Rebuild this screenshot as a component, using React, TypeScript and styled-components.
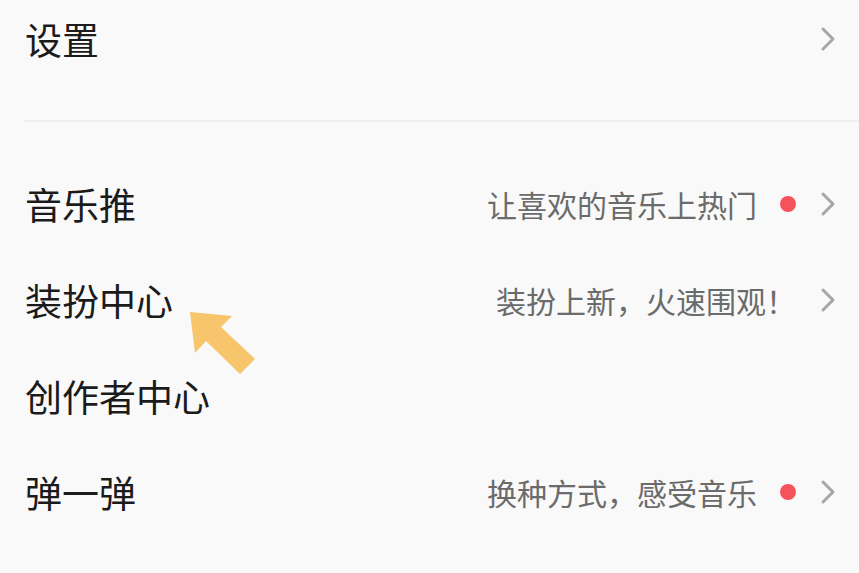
import React from "react";
import styled, { createGlobalStyle } from "styled-components";

const GlobalStyle = createGlobalStyle`
  html, body {
    margin: 0;
    padding: 0;
    background: #f9f9f9;
  }
  body {
    font-family: "Noto Sans CJK SC", "Noto Sans", sans-serif;
  }
`;

const Screen = styled.div`
  position: relative;
  width: 859px;
  height: 573px;
  overflow: hidden;
  background: #f9f9f9;
`;

const TopSection = styled.div`
  margin-left: 24px;
  padding: 0 23px 42px 1px;
  border-bottom: 2px solid #eeeeee;
`;

const List = styled.div`
  padding: 34px 23px 0 25px;
`;

const Row = styled.div<{ $h: number }>`
  height: ${(p) => p.$h}px;
  display: flex;
  align-items: center;
`;

const Title = styled.div`
  flex: 1;
  font-size: 37px;
  color: #1b1b1b;
  line-height: 1;
`;

const Hint = styled.div`
  font-size: 30px;
  color: #6b6b6b;
  line-height: 1;
`;

const Dot = styled.span`
  width: 16px;
  height: 16px;
  border-radius: 50%;
  background: #f4535b;
  margin-left: 23px;
`;

const Chevron = styled.svg`
  width: 16px;
  height: 26px;
  margin-left: 24px;
  flex-shrink: 0;
`;

const Pointer = styled.svg`
  position: absolute;
  left: 0;
  top: 0;
  pointer-events: none;
`;

const Arrow = () => (
  <Chevron viewBox="0 0 16 26">
    <polyline
      points="3,3 13,13 3,23"
      fill="none"
      stroke="#a6a6a6"
      strokeWidth="3"
      strokeLinecap="round"
      strokeLinejoin="round"
    />
  </Chevron>
);

type Item = { title: string; hint?: string; dot?: boolean; chevron?: boolean };

const items: Item[] = [
  { title: "音乐推", hint: "让喜欢的音乐上热门", dot: true, chevron: true },
  { title: "装扮中心", hint: "装扮上新，火速围观！", chevron: true },
  { title: "创作者中心" },
  { title: "弹一弹", hint: "换种方式，感受音乐", dot: true, chevron: true },
];

const App = () => {
  return (
    <Screen>
      <GlobalStyle />
      <TopSection>
        <Row $h={78}>
          <Title>设置</Title>
          <Arrow />
        </Row>
      </TopSection>
      <List>
        {items.map((it) => (
          <Row $h={96} key={it.title}>
            <Title>{it.title}</Title>
            {it.hint && <Hint>{it.hint}</Hint>}
            {it.dot && <Dot />}
            {it.chevron && <Arrow />}
          </Row>
        ))}
      </List>
      <Pointer width="859" height="573" viewBox="0 0 859 573">
        <polygon
          points="190,312 232,316 221,327 255,359 240,374 206,341 195,353"
          fill="#f6c56c"
        />
      </Pointer>
    </Screen>
  );
};

export default App;
